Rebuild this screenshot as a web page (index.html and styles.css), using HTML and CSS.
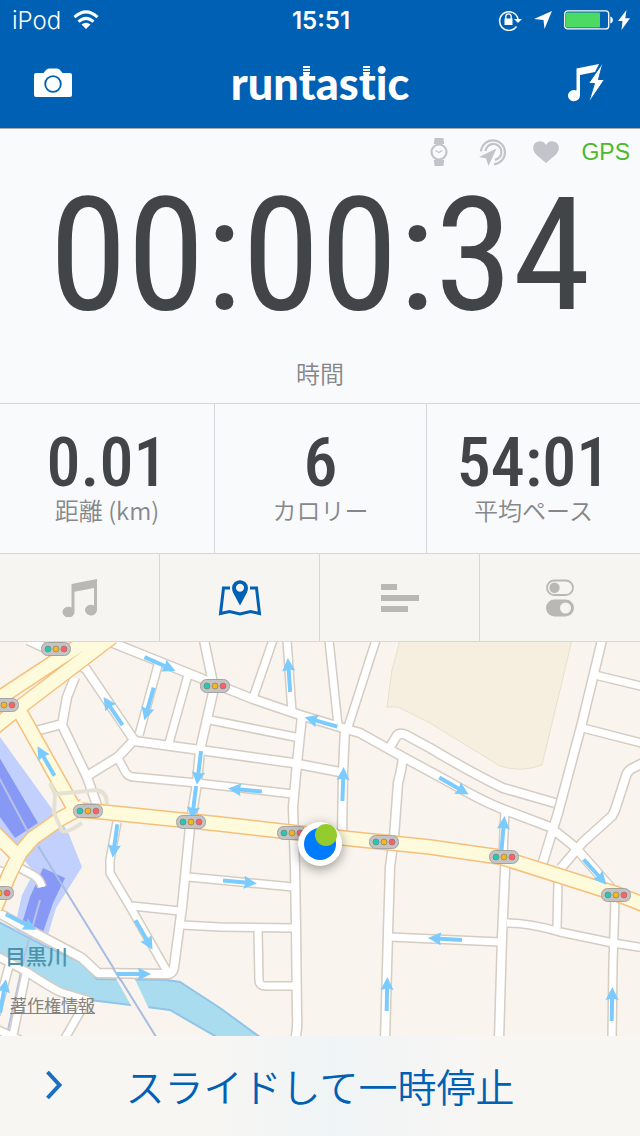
FILE: index.html
```
<!DOCTYPE html>
<html lang="ja">
<head>
    <meta charset="utf-8">
    <meta name="viewport" content="width=device-width, initial-scale=1">
    <title>runtastic</title>
    <link rel="stylesheet" href="styles.css">
</head>

<body class="flex-col">
    <div class="status-bar">
        <div class="status-left">
            <span>iPod</span>
            <svg class="wifi" width="26" height="20" viewBox="0 0 26 20">
                <path d="M1.500 7.200Q13-3.600 24.500 7.200M5.500 11.700Q13 5 20.500 11.700" fill="none" stroke="#fff" stroke-width="3"/>
                <path d="M8.500 14.500Q13 11 17.500 14.500L13 19z" fill="#fff"/>
            </svg>
        </div>
        <span class="clock">15:51</span>
        <div class="status-right">
            <svg width="24" height="22" viewBox="0 0 24 22">
                <path d="M18.500 17.500A9.300 9.300 0 1 1 20 10" fill="none" stroke="#fff" stroke-width="1.500"/>
                <path d="M16 10h8l-4 4z" fill="#fff"/>
                <rect x="6.500" y="9.500" width="8" height="6.500" fill="#fff"/>
                <path d="M7.800 10V7.500a2.700 2.700 0 0 1 5.400 0V10" fill="none" stroke="#fff" stroke-width="1.300"/>
            </svg>
            <svg width="18" height="18" viewBox="0 0 18 18"><path d="M18 0L10.500 18 9.500 9 0 8z" fill="#fff"/></svg>
            <svg width="50" height="20" viewBox="0 0 50 20">
                <rect x=".7" y=".9" width="44" height="18" rx="3" fill="none" stroke="#fff" stroke-width="1.300"/>
                <rect x="2" y="2.500" width="34" height="15" rx="1" fill="#4cd964"/>
                <path d="M46.300 6.500c3.500 1 3.500 6 0 7z" fill="#fff"/>
            </svg>
            <svg width="12" height="20" viewBox="0 0 12 20"><path d="M8.500 0L0 11h4.500L3.500 20 12 8.300H7.300z" fill="#fff"/></svg>
        </div>
    </div>

    <header class="header">
        <button class="icon-button" aria-label="カメラ">
            <svg width="40" height="30" viewBox="0 0 40 30">
                <path d="M3 5h7.500l2.500-3q1.300-1.500 3-1.500h8q1.800 0 3 1.500l2.500 3H37q2 0 2 2v20q0 2-2 2H3q-2 0-2-2V7q0-2 2-2z" fill="#fff"/>
                <circle cx="20" cy="16" r="7.800" fill="none" stroke="#0060b4" stroke-width="1.800"/>
            </svg>
        </button>
        <div class="logo">run<span class="logo-t">t</span>as<span class="logo-t">t</span>ic</div>
        <button class="icon-button" aria-label="パワーソング">
            <svg width="38" height="42" viewBox="0 0 38 42">
                <path d="M9.500 6.500L32 2 28 10 13 13V33.500a6 5.600 0 1 1-3.500-5z" fill="#fff"/>
                <path d="M36 .5L21.500 21.500h6L21.500 41 37.500 17.500h-6z" fill="#fff" stroke="#0060b4"/>
            </svg>
        </button>
    </header>

    <main class="flex-col flex-grow">
        <section class="timer">
            <div class="sensors">
                <svg class="watch" width="18" height="28" viewBox="0 0 18 28" fill="#c1c5c9">
                    <path d="M4.500 0h9l.7 6H3.800zM4.500 28h9l.7-6H3.800z"/>
                    <circle cx="9" cy="14" r="7.500" fill="none" stroke="#c1c5c9" stroke-width="2.200"/>
                    <path d="M5.500 12.500L9 14.500l3.500-2" fill="none" stroke="#c1c5c9" stroke-width="1.400"/>
                </svg>
                <svg width="28" height="28" viewBox="0 0 28 28">
                    <path d="M2 13.500A12 12 0 1 1 15 26.300M6.500 13A8 8 0 1 1 16 21.800" fill="none" stroke="#c1c5c9" stroke-width="2.200"/>
                    <path d="M17.500 10.500L0 19l7 1.500L9.500 28z" fill="#c1c5c9"/>
                </svg>
                <svg width="26" height="22" viewBox="0 0 26 22"><path d="M13 22L3 13.500C-2 8 0 1 6 .4 9.500 0 11.500 1.500 13 4 14.500 1.500 16.500 0 20 .4 26 1 28 8 23 13.500z" fill="#c1c5c9"/></svg>
                <span class="gps">GPS</span>
            </div>
            <div class="time">00:00:34</div>
            <div class="label">時間</div>
        </section>

        <section class="stats">
            <div class="stat"><div class="value">0.01</div><div class="label">距離 (km)</div></div>
            <div class="stat"><div class="value">6</div><div class="label">カロリー</div></div>
            <div class="stat"><div class="value">54:01</div><div class="label">平均ペース</div></div>
        </section>

        <nav class="tabs">
            <button class="tab" aria-label="音楽">
                <svg width="36" height="38" viewBox="0 0 36 38"><path d="M9.500 5L35 0v31a6 5.400 0 1 1-3-4.600V9L12.500 12.800V33a6 5.400 0 1 1-3-4.600z" fill="currentColor"/></svg>
            </button>
            <button class="tab active" aria-label="地図">
                <svg width="44" height="38" viewBox="0 0 44 38">
                    <path d="M12 9H5.500L2.500 34.500l9-2L22 35l10.500-2.500 9 2L38.500 9H32" fill="none" stroke="currentColor" stroke-width="3"/>
                    <path fill-rule="evenodd" d="M22 26.500L15 13.500Q12.500 7 16.500 3.200 22-.8 27.500 3.200 31.500 7 29 13.500zM22 4.800a4 4 0 1 0 .01 0z" fill="currentColor"/>
                </svg>
            </button>
            <button class="tab" aria-label="ラップ">
                <svg width="38" height="28" viewBox="0 0 38 28"><path d="M0 0h16v6H0zM0 11h38v6H0zM0 22h27v6H0z" fill="currentColor"/></svg>
            </button>
            <button class="tab" aria-label="設定">
                <svg width="30" height="38" viewBox="0 0 30 38">
                    <rect x="2" y="1.500" width="26" height="14.500" rx="7.200" fill="none" stroke="currentColor" stroke-width="1.800"/>
                    <circle cx="9.500" cy="8.800" r="5.200" fill="currentColor"/>
                    <rect x="1" y="20.500" width="28" height="17" rx="8.500" fill="currentColor"/>
                    <circle cx="20.500" cy="29" r="5.500" fill="#f7f5f1"/>
                </svg>
            </button>
        </nav>

        <section class="map">
            <svg class="map-canvas" viewBox="0 642 640 394" preserveAspectRatio="xMidYMid slice">
                <defs>
                    <g id="streets">
                        <path d="M113 643L158 661 215 684 253 699 300 715 343 728 360 733 403 757 440 777 467 792 Q487 803 505 810L550 827 575 847 617 895"/>
                        <path d="M204 640L214 688 200 750 197 783 190 827 182 907 174 967Q173 975 165 974L98 973 82 958Q60 946 33 932L-5 911"/>
                        <path d="M28 640L67 658 86 669 134 740 118 757 87 776"/>
                        <path d="M75 677L67 697 62 725 87 777 98 808M62 724L32 732"/>
                        <path d="M134 741L200 750 293 763 340 772"/>
                        <path d="M302 716L297 763 293 807 295 867 296 927 297 1015Q298 1028 295 1040"/>
                        <path d="M345 728L343 773 342 837"/>
                        <path d="M403 757Q402 768 398 783L394 837 390 867 388 933 385 1040"/>
                        <path d="M390 747L396 737Q399 732 406 735L430 748Q470 772 503 788L555 803"/>
                        <path d="M602 640L582 723 558 813 542 865"/>
                        <path d="M645 762L631 769Q627 772 626 776L615 810 612 816 583 842 561 868"/>
                        <path d="M506 850L502 937 499 1040"/>
                    </g>
                    <g id="lanes">
                        <path d="M158 665L139 735M188 675L169 743M119 760L126 773Q129 777 134 777L197 783 293 794M210 720L300 738"/>
                        <path d="M273 640L253 698M287 640L292 712M329 640L338 725M376 640L348 727"/>
                        <path d="M595 675L645 687M583 728L645 744M505 810L503 855"/>
                        <path d="M507 923Q530 923 560 932L613 943 645 948M558 882L557 928M615 900L613 963 612 1040M500 942L390 937"/>
                        <path d="M117 822L110 860 110 873 132 910 168 973M132 906L180 911M188 877L220 880 293 887M182 925L220 927 293 928"/>
                        <path d="M258 930L259 980Q259 986 266 986H293"/>
                        <path d="M-5 955L27 972 Q48 986 60 992L87 1000 64 1040M26 973L12 1040M9 966L-4 1015M-4 1029L20 1040"/>
                        <path d="M-4 870L4 872M18 867L33 875Q40 879 42 887"/>
                    </g>
                    <g id="avenues">
                        <path d="M92 637L-5 701M112 637L20 707-5 727"/>
                        <path d="M20 712L74 808"/>
                        <path d="M-5 833L15 853M84 806L60 819 33 838 20 853 10 873-5 908"/>
                        <path d="M78 810L103 812 220 824 290 832 343 838 430 847 500 857 617 894 645 905"/>
                    </g>
                    <g id="light">
                        <rect x="-14.500" y="-6.500" width="29" height="13" rx="6" fill="#c5c3c3" stroke="#a5a3a2"/>
                        <g stroke="#77786f" stroke-width=".6">
                            <circle cx="-8" r="3" fill="#23c9b0"/>
                            <circle r="3" fill="#f8b51c"/>
                            <circle cx="8" r="3" fill="#ff6066"/>
                        </g>
                    </g>
                    <path id="arrow" d="M-17-2H5L4-6.500 17 0 4 6.500 5 2H-17z"/>
                </defs>

                <path class="park" d="M400 640L392 670 387 707 398 707 430 723 500 766Q520 773 542 765L572 640z"/>
                <path class="river" d="M-5 920L43 945 83 963 97 979 167 980 180 982 220 1008 264 1040H222L170 1010 147 1007 90 1000 50 987-5 955z"/>
                <path class="bridge" d="M114 975L133 975 149 1009 132 1007z"/>
                <path class="station" d="M-5 730L60 820 68 832 82 867 56 908 45 945 14 930 22 895 34 872-5 825z"/>
                <path class="platform" d="M-5 750L38 823 15 838-5 810zM43 868L65 878 53 903 42 935 20 930 30 897z"/>
                <path class="track" d="M-5 770L28 832M40 900L26 950 8 1030"/>
                <path class="rail" d="M38 846L158 1040"/>

                <use href="#streets" class="casing"/>
                <use href="#lanes" class="casing thin"/>
                <use href="#streets" class="street"/>
                <use href="#lanes" class="street thin"/>
                <path class="rail" d="M113 968L121 981"/>

                <use href="#avenues" class="avenue-casing"/>
                <use href="#avenues" class="avenue"/>
                <path class="loop" d="M50 783L55 794 97 790Q107 792 107 804M55 794L54 813 62 831Q66 834 82 823"/>

                <g class="arrows">
                    <use href="#arrow" transform="translate(160 664) rotate(24)"/>
                    <use href="#arrow" transform="translate(149 704) rotate(106)"/>
                    <use href="#arrow" transform="translate(113 711) rotate(236)"/>
                    <use href="#arrow" transform="translate(46 761) rotate(240)"/>
                    <use href="#arrow" transform="translate(199 768) rotate(97)"/>
                    <use href="#arrow" transform="translate(194 803) rotate(97)"/>
                    <use href="#arrow" transform="translate(115 841) rotate(98)"/>
                    <use href="#arrow" transform="translate(289 675) rotate(266)"/>
                    <use href="#arrow" transform="translate(321 722) rotate(196)"/>
                    <use href="#arrow" transform="translate(245 790) rotate(185)"/>
                    <use href="#arrow" transform="translate(343 784) rotate(272)"/>
                    <use href="#arrow" transform="translate(454 786) rotate(30)"/>
                    <use href="#arrow" transform="translate(503 833) rotate(275)"/>
                    <use href="#arrow" transform="translate(595 872) rotate(48)"/>
                    <use href="#arrow" transform="translate(445 939) rotate(183)"/>
                    <use href="#arrow" transform="translate(612 1004) rotate(271)"/>
                    <use href="#arrow" transform="translate(387 994) rotate(271)"/>
                    <use href="#arrow" transform="translate(240 882) rotate(5)"/>
                    <use href="#arrow" transform="translate(144 935) rotate(60)"/>
                    <use href="#arrow" transform="translate(134 974)"/>
                    <use href="#arrow" transform="translate(21 922) rotate(27)"/>
                    <use href="#arrow" transform="translate(3 996) rotate(280)"/>
                </g>

                <use href="#light" x="56" y="649"/>
                <use href="#light" x="215" y="686"/>
                <use href="#light" x="4" y="705"/>
                <use href="#light" x="88" y="811"/>
                <use href="#light" x="191" y="822"/>
                <use href="#light" x="292" y="833"/>
                <use href="#light" x="384" y="842"/>
                <use href="#light" x="504" y="857"/>
                <use href="#light" x="616" y="895"/>
                <use href="#light" x="-1" y="893"/>

                <text class="river-name" x="5" y="964">目黒川</text>

                <circle class="halo" cx="320" cy="844" r="22"/>
                <circle cx="320" cy="844" r="16" fill="#007aff"/>
                <circle cx="326" cy="835" r="11" fill="#94cc2e"/>
            </svg>
            <a class="legal" href="#legal">著作権情報</a>
        </section>
    </main>

    <button class="slider">
        <svg width="18" height="30" viewBox="0 0 18 30"><path d="M2.500 2L14.500 15 2.500 28" fill="none" stroke="#1a70bf" stroke-width="4"/></svg>
        <span class="slider-text">スライドして一時停止</span>
    </button>
</body>

</html>
```
FILE: styles.css
```
/* Helpers */
.flex-col {
    display: flex;
    flex-direction: column;
}
.flex-grow { flex-grow: 1; }

/* General Styling */
* { box-sizing: border-box; }
body, html {
    margin: 0;
    padding: 0;
}
body {
    min-height: 100vh;
    background: #f9fafc;
    font-family: "Liberation Sans", "Noto Sans CJK JP", sans-serif;
    color: #424548;
}
button {
    margin: 0;
    padding: 0;
    border: 0;
    background: none;
    font: inherit;
    color: inherit;
}
svg { display: block; flex-shrink: 0; }

/* Header */
.status-bar {
    display: grid;
    grid-template-columns: 1fr auto 1fr;
    align-items: center;
    height: 40px;
    padding: 0 10px 0 12px;
    background: #0060b4;
    color: #fff;
    font-family: Inter, sans-serif;
    font-size: 24px;
    font-weight: 300;
}
.status-left, .status-right {
    display: flex;
    align-items: center;
    gap: 12px;
}
.status-right { justify-content: flex-end; }
.status-right svg:last-child { margin-left: -8px; }
.clock { font-weight: 600; }
.header {
    display: flex;
    align-items: center;
    justify-content: space-between;
    height: 89px;
    padding: 0 35px 3px 33px;
    background: #0060b4;
    border-bottom: 1px solid #a9adb2;
}
.logo {
    color: #fff;
    font-family: Lato, sans-serif;
    font-size: 45px;
    font-weight: 900;
    line-height: 54px;
    font-variant-ligatures: none;
}
/* Striped stem on top of each t */
.logo-t { position: relative; }
.logo-t::before {
    content: "";
    position: absolute;
    left: 4px;
    top: 10px;
    width: 7px;
    height: 8px;
    background: repeating-linear-gradient(#fff 0 2px, #0060b4 2px 3px);
}

/* Timer */
.timer {
    display: flex;
    flex-direction: column;
    height: 274px;
    text-align: center;
}
.sensors {
    display: flex;
    align-items: center;
    justify-content: flex-end;
    gap: 26px;
    height: 46px;
    padding-right: 10px;
}
.watch { margin-right: 5px; }
.gps {
    margin-left: -4px;
    font-size: 23px;
    color: #4cb82e;
}
.time {
    font-family: "Roboto Condensed", "Liberation Sans Narrow", sans-serif;
    font-size: 158px;
    line-height: 160px;
}
.label {
    font-family: "Noto Sans CJK JP", sans-serif;
    font-size: 24px;
    font-weight: 350;
    line-height: 32px;
    color: #85878a;
}
.timer .label { margin-top: 22px; }

/* Stats */
.stats {
    display: grid;
    grid-template-columns: 215fr 212fr 213fr;
    height: 150px;
    border-top: 1px solid #d5d8db;
    text-align: center;
}
.stat {
    padding-top: 24px;
    border-right: 1px solid #d5d8db;
}
.stat:last-child { border-right: 0; }
.value {
    font-family: "Roboto Condensed", "Liberation Sans Narrow", sans-serif;
    font-size: 68px;
    font-weight: 500;
    line-height: 70px;
}
.stat .label { line-height: 24px; }

/* Tabs */
.tabs {
    display: grid;
    grid-template-columns: repeat(4, 1fr);
    height: 89px;
    border: 1px solid #d5d8db;
    border-width: 1px 0;
    background: #f7f5f1;
}
.tab {
    display: flex;
    align-items: center;
    justify-content: center;
    border-right: 1px solid #d5d8db;
    color: #b9b8b4;
}
.tab:last-child { border-right: 0; }
.tab.active { color: #0060b4; }

/* Map */
.map {
    position: relative;
    flex: 1 1 394px;
    min-height: 394px;
    background: #f9f4ed;
    overflow: hidden;
}
.map-canvas {
    width: 100%;
    height: 100%;
    min-height: 394px;
}
.park { fill: #f6eedf; stroke: #eadfce; }
.river { fill: #a8dcee; stroke: #92c4ea; stroke-width: 2; }
.bridge { fill: #f9f4ed; }
.station { fill: #c1d0fc; }
.platform { fill: #8899f5; }
.track { fill: none; stroke: #b6c2e6; stroke-width: 2; }
.rail { fill: none; stroke: #a9bce2; stroke-width: 2; }
.casing, .street, .avenue, .avenue-casing {
    fill: none;
    stroke-linejoin: round;
}
.casing { stroke: #d5ccc2; stroke-width: 11px; }
.casing.thin { stroke-width: 10px; }
.street { stroke: #fff; stroke-width: 8px; }
.street.thin { stroke-width: 7px; }
.avenue-casing { stroke: #f5c07c; stroke-width: 16px; }
.avenue { stroke: #fdfbdc; stroke-width: 13px; }
.loop { fill: none; stroke: #e4e2d4; stroke-width: 4; }
.arrows { fill: #7bcbff; }
.halo { fill: #fff; filter: drop-shadow(0 3px 6px rgba(0, 0, 0, 0.4)); }
.river-name {
    fill: #4c92ad;
    font-family: "Noto Sans CJK JP", sans-serif;
    font-size: 21px;
    font-weight: 500;
}
.legal {
    position: absolute;
    left: 10px;
    bottom: 19px;
    font-family: "Noto Sans CJK JP", sans-serif;
    font-size: 17px;
    line-height: 24px;
    color: #85827e;
}

/* Slider */
.slider {
    display: grid;
    grid-template-columns: 80px 1fr 80px;
    align-items: center;
    height: 100px;
    padding: 0 45px 2px;
    background: linear-gradient(90deg, #f7f6f3, #f8f6f2 30%, #eff4f6 52%, #f8f6f3 75%, #f7f6f3);
    color: #0060b4;
}
.slider-text {
    font-family: "Noto Sans CJK JP", sans-serif;
    font-size: 39px;
    font-weight: 350;
    line-height: 56px;
    white-space: nowrap;
}
```
